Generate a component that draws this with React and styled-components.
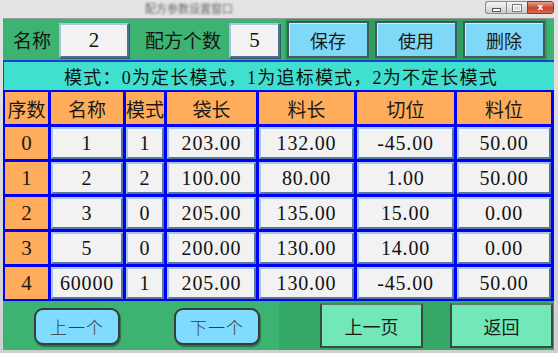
import React from "react";
import styled, { createGlobalStyle } from "styled-components";

const GlobalStyle = createGlobalStyle`
  html, body {
    margin: 0;
    padding: 0;
    background: #ffffff;
  }
  body {
    font-family: "Liberation Serif", "Noto Sans CJK SC", serif;
  }
`;

const headers = ["序数", "名称", "模式", "袋长", "料长", "切位", "料位"];

const rows = [
  ["0", "1", "1", "203.00", "132.00", "-45.00", "50.00"],
  ["1", "2", "2", "100.00", "80.00", "1.00", "50.00"],
  ["2", "3", "0", "205.00", "135.00", "15.00", "0.00"],
  ["3", "5", "0", "200.00", "130.00", "14.00", "0.00"],
  ["4", "60000", "1", "205.00", "130.00", "-45.00", "50.00"],
];

export default function App() {
  return (
    <>
      <GlobalStyle />
      <Window>
        <TitleBar>
          <TitleText>配方参数设置窗口</TitleText>
          <Controls>
            <CtrlButton>
              <MinGlyph />
            </CtrlButton>
            <CtrlButton>
              <MaxGlyph />
            </CtrlButton>
            <CloseButton>x</CloseButton>
          </Controls>
        </TitleBar>

        <Content>
          <TopBar>
            <Label>名称</Label>
            <InputBox width={70}>2</InputBox>
            <Label style={{ marginLeft: 16 }}>配方个数</Label>
            <InputBox width={51}>5</InputBox>
            <ButtonGroup>
              <ActionButton>保存</ActionButton>
              <ActionButton>使用</ActionButton>
              <ActionButton>删除</ActionButton>
            </ButtonGroup>
          </TopBar>

          <Banner>模式：0为定长模式，1为追标模式，2为不定长模式</Banner>

          <Table>
            {headers.map((h) => (
              <HeaderCell key={h}>{h}</HeaderCell>
            ))}
            {rows.map((r) =>
              r.map((v, i) =>
                i === 0 ? (
                  <IndexCell key={r[0] + "-" + i}>{v}</IndexCell>
                ) : (
                  <DataCell key={r[0] + "-" + i}>{v}</DataCell>
                )
              )
            )}
          </Table>

          <BottomBar>
            <LeftNav>
              <NavButton>上一个</NavButton>
              <NavButton>下一个</NavButton>
            </LeftNav>
            <RightNav>
              <PageButton>上一页</PageButton>
              <PageButton>返回</PageButton>
            </RightNav>
          </BottomBar>
        </Content>
      </Window>
    </>
  );
}

const Window = styled.div`
  width: 558px;
  height: 353px;
  box-sizing: border-box;
  display: flex;
  flex-direction: column;
  background: linear-gradient(#e4e4e4, #cfcfcf);
  padding: 0 4px 3px 3px;
  overflow: hidden;
`;

const TitleBar = styled.div`
  height: 19px;
  flex: none;
  display: flex;
  align-items: flex-start;
  position: relative;
  border-bottom: 1px solid #9a9a9a;
  box-sizing: border-box;
`;

const TitleText = styled.span`
  margin: 2px 0 0 142px;
  font-family: "Noto Sans CJK SC", sans-serif;
  font-size: 11px;
  line-height: 13px;
  color: #6a6a6a;
  filter: blur(1.3px);
`;

const Controls = styled.div`
  position: absolute;
  right: 0;
  top: 1px;
  display: flex;
`;

const CtrlButton = styled.div`
  width: 21px;
  height: 13px;
  box-sizing: border-box;
  border: 1px solid #8c8c8c;
  border-right: none;
  background: linear-gradient(#f4f4f4, #cdcdcd);
  display: flex;
  align-items: center;
  justify-content: center;
  &:first-child {
    border-radius: 3px 0 0 3px;
  }
`;

const MinGlyph = styled.span`
  width: 7px;
  height: 2px;
  margin-top: 4px;
  background: #ffffff;
  border: 1px solid #555;
`;

const MaxGlyph = styled.span`
  width: 6px;
  height: 4px;
  background: transparent;
  border: 1px solid #fff;
  outline: 1px solid #777;
`;

const CloseButton = styled.div`
  width: 27px;
  height: 13px;
  box-sizing: border-box;
  border: 1px solid #8a3a30;
  border-radius: 0 3px 3px 0;
  background: linear-gradient(#e8a090, #c8452e 55%, #d86a50);
  color: #ffffff;
  font-family: "DejaVu Sans", sans-serif;
  font-weight: bold;
  font-size: 9px;
  line-height: 11px;
  text-align: center;
`;

const Content = styled.div`
  flex: 1;
  display: flex;
  flex-direction: column;
  background: #3cb371;
`;

const TopBar = styled.div`
  height: 41px;
  flex: none;
  display: flex;
  align-items: center;
  padding-left: 10px;
  box-sizing: border-box;
`;

const Label = styled.span`
  font-family: "Noto Sans CJK SC", sans-serif;
  font-size: 19px;
  line-height: 24px;
  color: #151515;
  margin-right: 8px;
`;

const InputBox = styled.div`
  width: ${(p) => p.width}px;
  height: 35px;
  box-sizing: border-box;
  background: #f2f2f2;
  border: 2px solid;
  border-color: #a8c4e4 #4d6f92 #4d6f92 #a8c4e4;
  box-shadow: 1px 1px 0 #2f5f5f;
  display: flex;
  align-items: center;
  justify-content: center;
  font-size: 21px;
  color: #111;
  margin-top: 2px;
`;

const ButtonGroup = styled.div`
  display: flex;
  gap: 3px;
  margin-left: 5px;
  padding: 2px;
  background: #2f9d5e;
`;

const ActionButton = styled.div`
  width: 82px;
  height: 37px;
  box-sizing: border-box;
  background: #80d8f8;
  border: 2px solid #44585a;
  box-shadow: inset 1px 1px 0 #c8f0ff;
  display: flex;
  align-items: center;
  justify-content: center;
  font-family: "Noto Sans CJK SC", sans-serif;
  font-size: 18px;
  color: #1a1a1a;
  & + & {
    margin-left: 3px;
  }
`;

const Banner = styled.div`
  height: 30px;
  flex: none;
  box-sizing: border-box;
  background: #40e0d0;
  border-top: 2px solid #1f3cd8;
  border-left: 1px solid #1f3cd8;
  display: flex;
  align-items: center;
  justify-content: center;
  font-family: "Liberation Serif", "Noto Sans CJK SC", serif;
  font-size: 18px;
  letter-spacing: 1.2px;
  color: #111;
  padding-left: 4px;
`;

const Table = styled.div`
  height: 211px;
  flex: none;
  box-sizing: border-box;
  display: grid;
  grid-template-columns: 43px 72px 38px 89px 95px 97px 94px;
  grid-template-rows: 32px repeat(5, 32px);
  gap: 3px;
  padding: 2px;
  background: #0000ff;
`;

const HeaderCell = styled.div`
  background: #ffad5a;
  display: flex;
  align-items: center;
  justify-content: center;
  font-family: "Noto Sans CJK SC", sans-serif;
  font-size: 19px;
  color: #1a1a1a;
  white-space: nowrap;
  overflow: hidden;
`;

const IndexCell = styled.div`
  background: #ffad5a;
  display: flex;
  align-items: center;
  justify-content: center;
  font-size: 21px;
  color: #1a1a1a;
`;

const DataCell = styled.div`
  background: #f2f2f2;
  box-sizing: border-box;
  border: 2px solid;
  border-color: #a9c6e6 #56789a #56789a #a9c6e6;
  display: flex;
  align-items: center;
  justify-content: center;
  font-size: 20px;
  letter-spacing: 0.8px;
  color: #111;
`;

const BottomBar = styled.div`
  flex: 1;
  display: flex;
`;

const LeftNav = styled.div`
  width: 276px;
  display: flex;
  align-items: center;
  padding-left: 31px;
  gap: 54px;
  box-sizing: border-box;
`;

const RightNav = styled.div`
  flex: 1;
  display: flex;
  align-items: center;
  background: #35a866;
  padding-left: 41px;
  gap: 27px;
`;

const NavButton = styled.div`
  width: 86px;
  height: 37px;
  box-sizing: border-box;
  border: 2px solid #3b3b3b;
  border-radius: 9px;
  background: #80dcff;
  box-shadow: 1px 2px 1px rgba(0, 0, 0, 0.35);
  display: flex;
  align-items: center;
  justify-content: center;
  font-family: "Noto Sans CJK SC", sans-serif;
  font-size: 17px;
  font-weight: 300;
  letter-spacing: 1px;
  color: #3a3a3a;
  margin-top: 2px;
`;

const PageButton = styled.div`
  width: 103px;
  height: 45px;
  box-sizing: border-box;
  border: 2px solid #3a4a40;
  border-top-color: #5c7a66;
  background: #72e8b8;
  display: flex;
  align-items: center;
  justify-content: center;
  font-family: "Noto Sans CJK SC", sans-serif;
  font-size: 18px;
  color: #1a1a1a;
`;
